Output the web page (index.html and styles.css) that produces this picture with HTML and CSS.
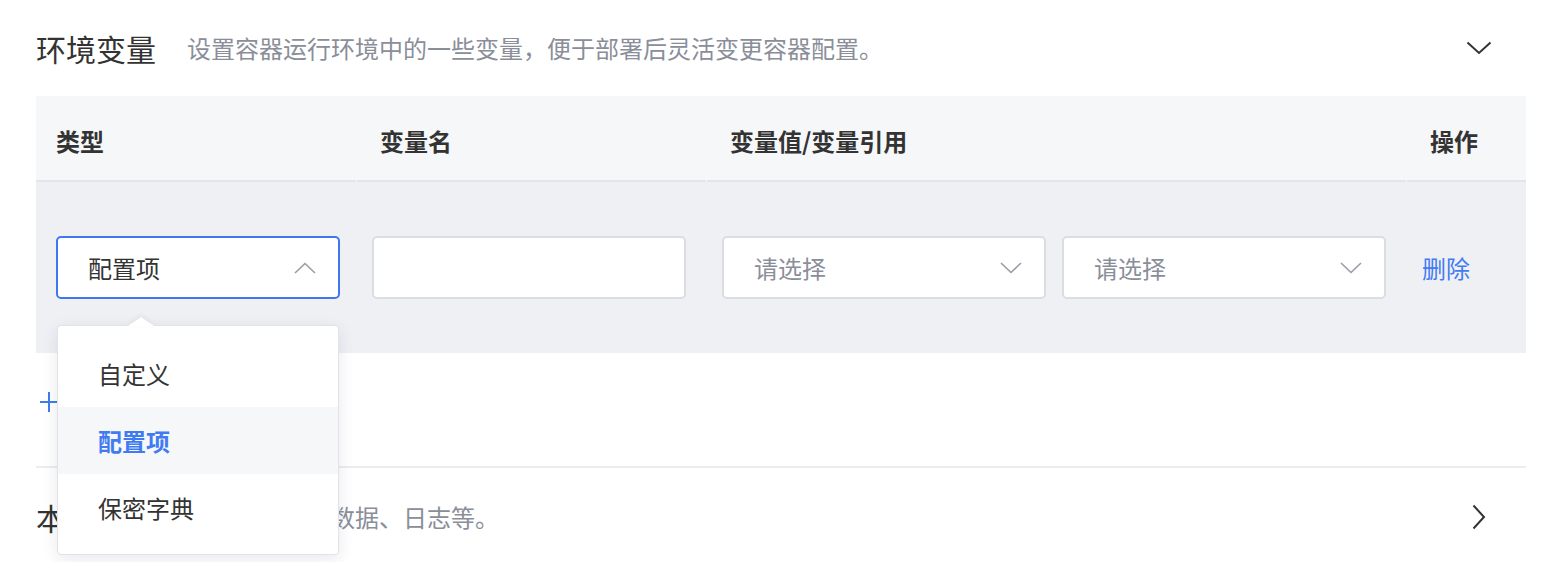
FILE: index.html
```html
<!DOCTYPE html>
<html lang="zh-CN">
<head>
<meta charset="utf-8">
<title>环境变量</title>
<link rel="stylesheet" href="styles.css">
</head>
<body>
<div class="page">
  <section class="panel">
    <div class="panel-head">
      <h2 class="panel-title">环境变量</h2>
      <p class="panel-desc">设置容器运行环境中的一些变量，便于部署后灵活变更容器配置。</p>
      <svg class="panel-toggle" width="26" height="14" viewBox="0 0 26 14"><path d="M1.5 1.5 L13 12 L24.5 1.5" fill="none" stroke="#333" stroke-width="2"/></svg>
    </div>
    <div class="table">
      <div class="thead">
        <div class="th th-type">类型</div>
        <div class="th">变量名</div>
        <div class="th">变量值/变量引用</div>
        <div class="th">操作</div>
      </div>
      <div class="tbody">
        <div class="td td-type">
          <div class="select select-open">
            <span class="select-value">配置项</span>
            <svg class="chev" width="22" height="12" viewBox="0 0 22 12"><path d="M1 11 L11 1.5 L21 11" fill="none" stroke="#9a9ca3" stroke-width="1.6"/></svg>
          </div>
          <div class="dropdown">
            <span class="dropdown-arrow"></span>
            <div class="option">自定义</div>
            <div class="option option-active">配置项</div>
            <div class="option">保密字典</div>
          </div>
        </div>
        <div class="td"><div class="input"></div></div>
        <div class="td td-pair">
          <div class="select">
            <span class="select-placeholder">请选择</span>
            <svg class="chev" width="22" height="12" viewBox="0 0 22 12"><path d="M1 1 L11 10.5 L21 1" fill="none" stroke="#9a9ca3" stroke-width="1.6"/></svg>
          </div>
          <div class="select">
            <span class="select-placeholder">请选择</span>
            <svg class="chev" width="22" height="12" viewBox="0 0 22 12"><path d="M1 1 L11 10.5 L21 1" fill="none" stroke="#9a9ca3" stroke-width="1.6"/></svg>
          </div>
        </div>
        <div class="td td-op"><a class="link">删除</a></div>
      </div>
    </div>
    <div class="add-row">
      <span class="add-plus"><svg width="18" height="20" viewBox="0 0 18 20"><path d="M9 0 V20 M0 10 H18" stroke="#417bf2" stroke-width="2"/></svg></span>
      <span class="add-text">添加变量</span>
    </div>
  </section>
  <section class="panel panel-collapsed">
    <div class="panel-head">
      <h2 class="panel-title">本地存储</h2>
      <p class="panel-desc">保存容器中的数据、日志等。</p>
      <svg class="panel-toggle" width="14" height="26" viewBox="0 0 14 26"><path d="M1.5 1.5 L12 13 L1.5 24.5" fill="none" stroke="#333" stroke-width="2"/></svg>
    </div>
  </section>
</div>
</body>
</html>
```
FILE: styles.css
```css
* { box-sizing: border-box; }
html, body { margin: 0; padding: 0; background: #fff; }
body {
  font-family: "Noto Sans CJK SC", "Noto Sans", sans-serif;
  color: #333;
}
.page { padding: 0 30px 0 36px; }

.panel-head {
  display: flex;
  align-items: center;
  height: 96px;
}
.panel-title {
  margin: 0;
  font-size: 30px;
  font-weight: 400;
  color: #333;
  line-height: 1;
}
.panel-desc {
  margin: 0 0 0 31px;
  font-size: 24px;
  color: #8a8e99;
  line-height: 1;
  flex: 1;
}
.panel-toggle { margin-right: 34px; }
.panel-collapsed { border-top: 2px solid #ebedf0; }
.panel-collapsed .panel-head { height: 96px; padding-top: 2px; }
.panel-collapsed .panel-toggle { margin-right: 40px; }

.thead {
  display: grid;
  grid-template-columns: 320px 349px 699px 119px;
  column-gap: 1px;
  background: #f6f7f9;
}
.th {
  height: 86px;
  display: flex;
  align-items: center;
  padding-left: 23px;
  padding-top: 4px;
  font-size: 24px;
  font-weight: 700;
  color: #333;
  border-bottom: 2px solid #e3e5eb;
}
.th-type { padding-left: 20px; }

.tbody {
  display: grid;
  grid-template-columns: 321px 350px 700px 119px;
  background: #eff0f4;
}
.td {
  height: 171px;
  display: flex;
  align-items: center;
  padding-left: 15px;
  position: relative;
}
.td-type { padding-left: 20px; }
.td-pair { gap: 16px; }

.select, .input {
  height: 63px;
  background: #fff;
  border: 2px solid #dcdde1;
  border-radius: 5px;
}
.input { width: 314px; }
.select {
  width: 324px;
  display: flex;
  align-items: center;
  justify-content: space-between;
  padding: 0 22px 0 30px;
  font-size: 24px;
}
.select-open {
  width: 284px;
  border-color: #3f77f0;
}
.select-value { color: #333; }
.select-placeholder { color: #8a8e99; }

.link {
  color: #417bf2;
  font-size: 24px;
  cursor: pointer;
}

.dropdown {
  position: absolute;
  left: 21px;
  top: 143px;
  width: 282px;
  background: #fff;
  border: 1px solid #e1e3e9;
  border-radius: 4px;
  padding: 14px 0 13px;
  box-shadow: 0 4px 16px rgba(30, 40, 70, 0.10);
  z-index: 10;
}
.dropdown-arrow {
  position: absolute;
  top: -9px;
  left: 70px;
  width: 0;
  height: 0;
  border-left: 13px solid transparent;
  border-right: 13px solid transparent;
  border-bottom: 9px solid #fff;
  filter: drop-shadow(0 -2px 2px rgba(30, 40, 70, 0.06));
}
.option {
  height: 67px;
  display: flex;
  align-items: center;
  padding-left: 40px;
  font-size: 24px;
  color: #333;
}
.option-active {
  background: #f6f7f9;
  color: #417bf2;
  font-weight: 700;
}

.add-row {
  height: 113px;
  display: flex;
  align-items: center;
  gap: 10px;
  padding-left: 4px;
  padding-bottom: 15px;
  color: #417bf2;
  font-size: 24px;
}
.add-plus { display: flex; }
```
